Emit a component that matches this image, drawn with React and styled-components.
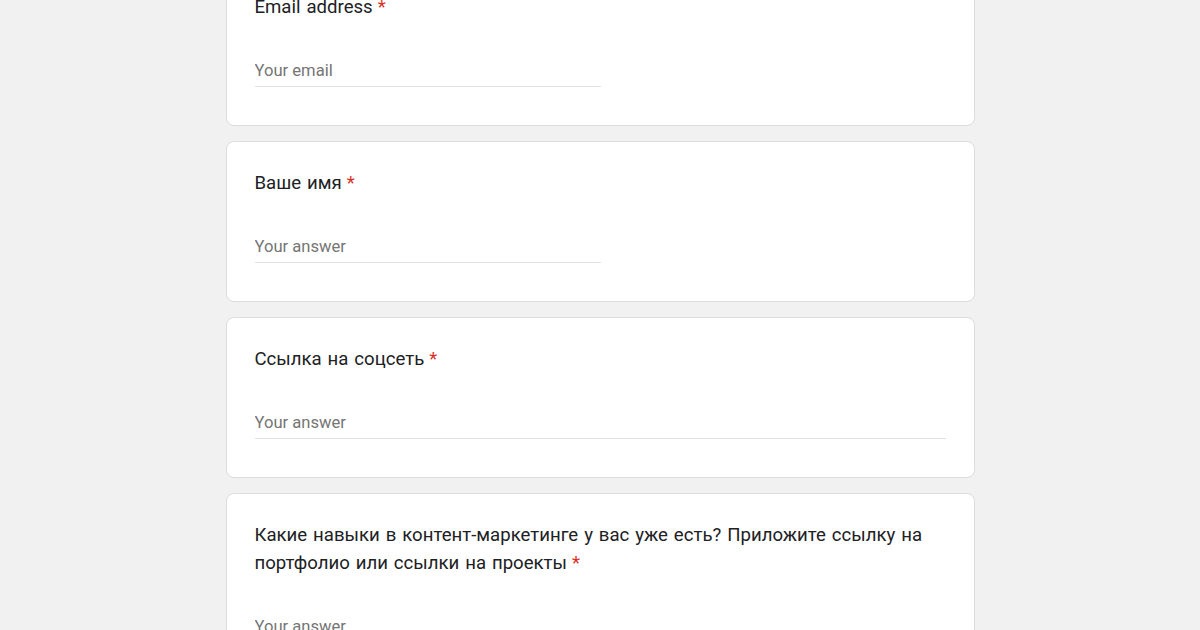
import React from 'react';
import styled, { createGlobalStyle } from 'styled-components';

const GlobalStyle = createGlobalStyle`
  html, body {
    margin: 0;
    padding: 0;
    background: #f1f1f1;
    font-family: Roboto, "Liberation Sans", Arial, sans-serif;
    overflow: hidden;
  }
`;

const questions = [
  { title: 'Email address', placeholder: 'Your email', wide: false },
  { title: 'Ваше имя', placeholder: 'Your answer', wide: false },
  { title: 'Ссылка на соцсеть', placeholder: 'Your answer', wide: true },
  {
    title: 'Какие навыки в контент-маркетинге у вас уже есть? Приложите ссылку на портфолио или ссылки на проекты',
    placeholder: 'Your answer',
    wide: true,
  },
];

function App() {
  return (
    <Page>
      <GlobalStyle />
      <Column>
        {questions.map((q, i) => (
          <Card key={i}>
            <Title>
              {q.title}
              <Required>*</Required>
            </Title>
            <Input placeholder={q.placeholder} $wide={q.wide} readOnly />
          </Card>
        ))}
      </Column>
    </Page>
  );
}
export default App;

const Page = styled.div`
  width: 1200px;
  height: 630px;
  overflow: hidden;
  display: flex;
  justify-content: center;
`;

const Column = styled.div`
  width: 749px;
  margin-top: -35px;
  display: flex;
  flex-direction: column;
  gap: 15px;
`;

const Card = styled.div`
  background: #fff;
  border: 1px solid #dadce0;
  border-radius: 8px;
  padding: 27px 28px 38px;
  box-sizing: border-box;
`;

const Title = styled.div`
  font-size: 18.6px;
  line-height: 28px;
  color: #202124;
  word-spacing: 1.3px;
  padding-right: 10px;
`;

const Required = styled.span`
  color: #d93025;
  margin-left: 5px;
`;

const Input = styled.input`
  display: block;
  margin-top: 33px;
  width: ${p => (p.$wide ? '100%' : '346px')};
  height: 33px;
  box-sizing: border-box;
  border: 0;
  border-bottom: 1px solid #e0e0e0;
  outline: none;
  padding: 0;
  font-family: Roboto, "Liberation Sans", Arial, sans-serif;
  font-size: 16.6px;
  color: #202124;
  background: transparent;
  &::placeholder {
    color: #757575;
  }
`;
